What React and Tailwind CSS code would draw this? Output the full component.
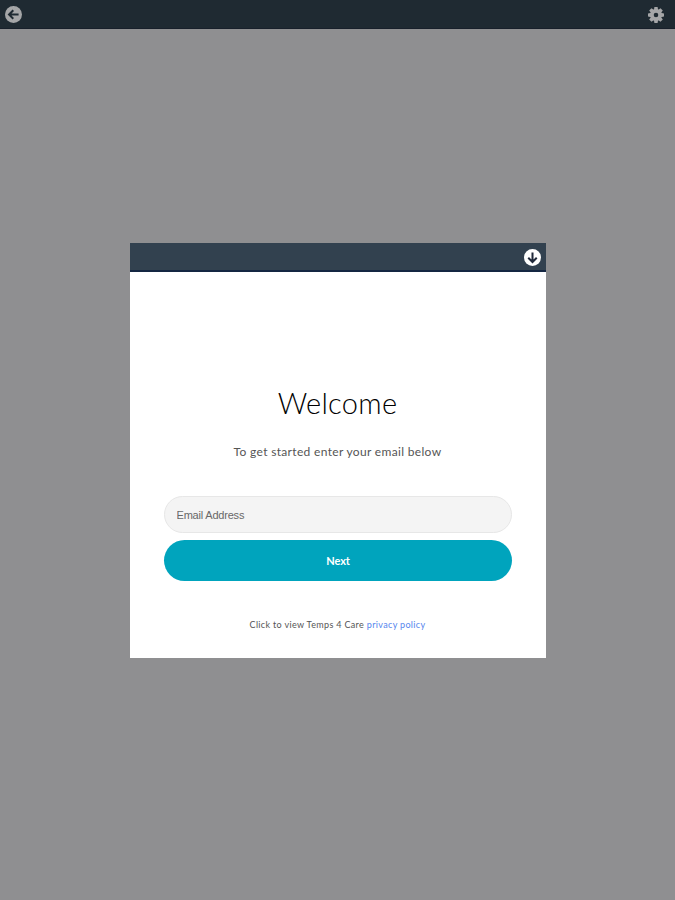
function ArrowBadge({ className, fill, ink }) {
  return (
    <svg viewBox="0 0 16 16" className={className} aria-hidden="true">
      <circle cx="8" cy="8" r="8" fill={fill} />
      <path d="M8 3.2v9M4 8.2l4 4 4-4" fill="none" stroke={ink} strokeWidth="1.9" />
    </svg>
  );
}

function Gear() {
  const teeth = [0, 45, 90, 135, 180, 225, 270, 315];
  return (
    <svg viewBox="-8 -8 16 16" className="h-4 w-4" aria-hidden="true">
      {teeth.map((angle) => (
        <path key={angle} d="M-2.2-4.5-1.6-8h3.2l.6 3.5z" fill="#a5a6a8" transform={`rotate(${angle})`} />
      ))}
      <circle r="4.1" fill="none" stroke="#a5a6a8" strokeWidth="3.6" />
    </svg>
  );
}

export default function App() {
  return (
    <div className="flex h-[900px] w-[675px] flex-col bg-[#8f8f91] font-['Lato','Open_Sans',sans-serif]">
      <header className="flex h-[29px] shrink-0 items-center justify-between border-b border-[#18202b] bg-[#1f2a32] pl-[5px] pr-[11px] pt-px">
        <button aria-label="Back">
          <ArrowBadge className="h-[17px] w-[17px] rotate-90" fill="#a5a6a8" ink="#1f2a32" />
        </button>
        <button aria-label="Settings">
          <Gear />
        </button>
      </header>
      <main className="mx-auto mt-[214px] flex h-[415px] w-[416px] flex-col bg-white">
        <div className="flex h-[29px] shrink-0 items-center justify-end border-b-2 border-[#142642] bg-[#32414f] pr-[5px] pt-px">
          <button aria-label="Collapse">
            <ArrowBadge className="h-[17px] w-[17px]" fill="#ffffff" ink="#20293a" />
          </button>
        </div>
        <div className="flex flex-col items-center px-[34px] pt-[111px]">
          <h1 className="h-10 whitespace-nowrap text-[29px] leading-10 font-light tracking-[0.3px] text-black">Welcome</h1>
          <p className="mt-[19px] h-5 whitespace-nowrap text-[12px] leading-5 tracking-[0.33px] text-[#555]">
            To get started enter your email below
          </p>
          <input
            aria-label="Email Address"
            placeholder="Email Address"
            className="mt-[34px] h-[37px] w-full rounded-full border border-[#e7e7e7] bg-[#f4f4f4] px-3 font-['Liberation_Sans',sans-serif] text-[11px] tracking-[-0.2px] placeholder:text-[#686868]"
          />
          <button className="mt-[7px] h-[41px] w-full rounded-full bg-[#00a4bd] pt-px pl-px text-[11px] font-bold tracking-[-0.1px] text-white">
            Next
          </button>
          <p className="mt-[34px] whitespace-nowrap text-[9px] leading-5 tracking-[0.34px] text-[#555]">
            Click to view Temps 4 Care <a className="text-[#5485ee]">privacy policy</a>
          </p>
        </div>
      </main>
    </div>
  );
}
